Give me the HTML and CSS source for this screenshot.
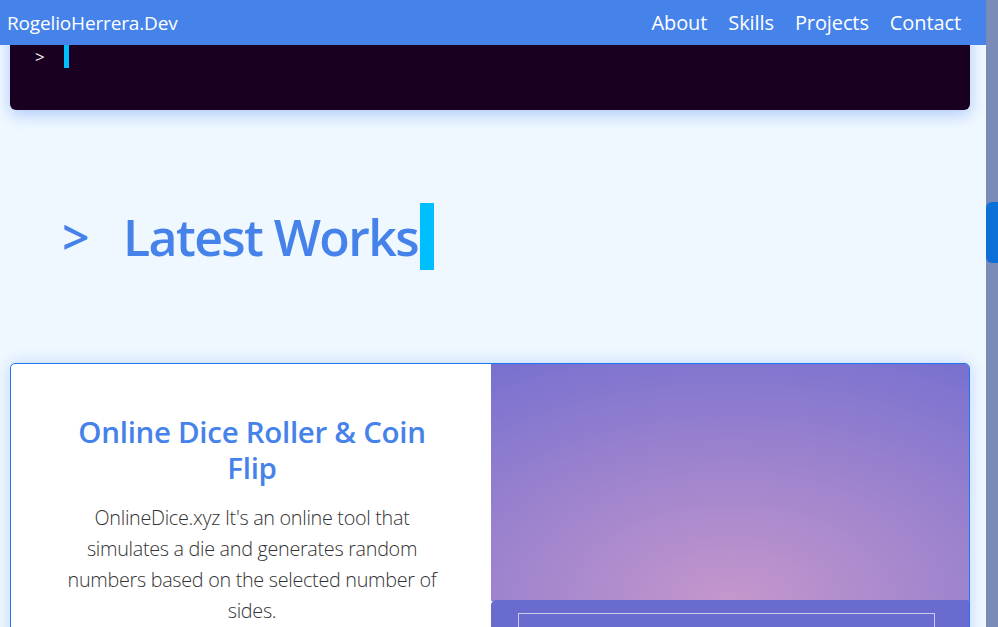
FILE: index.html
```html
<!DOCTYPE html>
<html lang="en">
<head>
<meta charset="utf-8">
<title>RogelioHerrera.Dev</title>
<link rel="stylesheet" href="styles.css">
</head>
<body>
<header class="navbar">
  <a class="brand" href="#">RogelioHerrera.Dev</a>
  <nav class="links">
    <a href="#about">About</a>
    <a href="#skills">Skills</a>
    <a href="#projects">Projects</a>
    <a href="#contact">Contact</a>
  </nav>
</header>

<main class="page">
  <section class="terminal">
    <div class="prompt"><span class="chev">&gt;</span><span class="term-cursor"></span></div>
  </section>

  <section class="works-head" id="projects">
    <h2 class="works-title"><span class="chev-big">&gt;</span><span class="title-text">Latest Works</span><span class="block-cursor"></span></h2>
  </section>

  <article class="card">
    <div class="card-info">
      <h3 class="card-title">Online Dice Roller &amp; Coin Flip</h3>
      <p class="card-text">OnlineDice.xyz It's an online tool that simulates a die and generates random numbers based on the selected number of sides.</p>
    </div>
    <div class="card-media">
      <div class="shot"></div>
      <div class="caption">
        <div class="caption-inner"></div>
      </div>
    </div>
  </article>
</main>

<div class="scrollbar"><div class="thumb"></div></div>
</body>
</html>
```
FILE: styles.css
```css
* { box-sizing: border-box; }
html, body { margin: 0; padding: 0; }
body {
  background: #f0f8ff;
  font-family: "Open Sans", "Noto Sans", sans-serif;
  overflow: hidden;
  width: 986px;
}
a { text-decoration: none; color: inherit; }

.navbar {
  position: fixed;
  top: 0; left: 0;
  width: 986px;
  height: 45px;
  background: #4582ea;
  color: #fff;
  display: flex;
  align-items: center;
  justify-content: space-between;
  padding: 0 25px 0 7px;
  z-index: 10;
}
.brand { font-size: 19px; letter-spacing: -0.15px; }
.links { display: flex; gap: 21px; font-size: 20px; letter-spacing: -0.1px; }

.page { padding: 0 16px 0 10px; }

.terminal {
  height: 110px;
  background: #1a0020;
  border-radius: 0 0 6px 6px;
  box-shadow: 0 5px 16px rgba(70, 130, 240, 0.38);
  display: flex;
  align-items: flex-end;
  padding: 0 0 42px 25px;
}
.prompt { display: flex; align-items: center; height: 23px; }
.chev { color: #f4f0f8; font-size: 17px; width: 29px; }
.term-cursor { width: 5px; height: 23px; background: #00bfff; }

.works-head {
  height: 253px;
  display: flex;
  align-items: center;
  padding: 0 0 0 52px;
}
.works-title {
  margin: 0;
  display: flex;
  align-items: center;
  color: #4582ea;
  font-weight: 600;
  font-size: 50px;
  letter-spacing: -1.6px;
}
.chev-big { font-weight: 600; width: 61px; font-size: 48px; }
.block-cursor { width: 14px; height: 67px; background: #00bfff; margin-left: 2px; }

.card {
  display: grid;
  grid-template-columns: 480px 480px;
  border: 1px solid #1f74f0;
  border-radius: 5px;
  background: #fff;
  box-shadow: 0 0 16px rgba(70, 130, 240, 0.28);
  overflow: hidden;
  height: 300px;
}
.card-info {
  padding: 50px 48px 0 50px;
  text-align: center;
}
.card-title {
  margin: 0 0 16px;
  color: #4582ea;
  font-weight: 600;
  font-size: 29.5px;
  line-height: 36px;
  letter-spacing: -0.3px;
}
.card-text {
  margin: 0;
  color: #333;
  font-weight: 300;
  font-size: 19.8px;
  line-height: 31px;
  letter-spacing: -0.3px;
}
.card-media { display: flex; flex-direction: column; }
.shot {
  height: 237px;
  background: radial-gradient(540px 320px at 50% 100%, #c597cc 0%, #6b6ad0 100%);
}
.caption {
  flex: 1;
  background: #6a6bcf;
  border-radius: 5px 5px 0 0;
  margin-top: -1px;
  padding: 13px 36px 0 27px;
}
.caption-inner {
  height: 80px;
  border: 1px solid rgba(255, 255, 255, 0.65);
}

.scrollbar {
  position: fixed;
  top: 0; right: 0;
  width: 12px;
  height: 627px;
  background: #7b8bb8;
}
.thumb {
  margin-top: 202px;
  height: 61px;
  background: #0d6fd8;
  border-radius: 6px 0 0 6px;
}
```
